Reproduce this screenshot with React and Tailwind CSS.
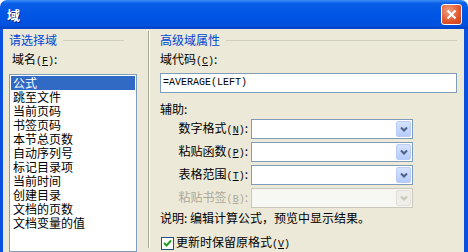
import React from "react";

const font = "font-['Noto_Sans_CJK_SC','Liberation_Sans',sans-serif]";

const items = [
  "公式",
  "跳至文件",
  "当前页码",
  "书签页码",
  "本节总页数",
  "自动序列号",
  "标记目录项",
  "当前时间",
  "创建目录",
  "文档的页数",
  "文档变量的值",
];

const Key = ({ k }) => (
  <span className="font-['Liberation_Mono',monospace] text-[10px]">
    (<u>{k}</u>)
  </span>
);

function Combo({ label, k, disabled }) {
  return (
    <div className="flex items-center h-[20px] mb-[3px]">
      <div className={`w-[91px] pr-[3px] text-right whitespace-nowrap ${disabled ? "text-[#aca899]" : "text-black"}`}>
        {label}
        <Key k={k} />:
      </div>
      <div
        className={`w-[162px] h-[20px] border flex justify-end items-center pr-[1px] ${
          disabled ? "border-[#c9c7ba] bg-[#f7f7f4]" : "border-[#7f9db9] bg-white"
        }`}
      >
        <div
          className={`w-[15px] h-[16px] rounded-[2px] flex items-center justify-center ${
            disabled
              ? "bg-[#efeee8] border border-[#e2e0d8]"
              : "bg-[linear-gradient(#d6e3fd,#b5cbfb)] border border-[#b9cdf9]"
          }`}
        >
          <svg width="8" height="6" viewBox="0 0 8 6">
            <path
              d="M1 1.5 L4 4.5 L7 1.5"
              fill="none"
              stroke={disabled ? "#c9c7ba" : "#4d6185"}
              strokeWidth="2"
            />
          </svg>
        </div>
      </div>
    </div>
  );
}

export default function App() {
  return (
    <div className={`w-[468px] h-[252px] overflow-hidden flex flex-col text-[12px] leading-[14px] ${font}`}>
      <div className="h-[29px] shrink-0 rounded-t-[7px] bg-[linear-gradient(#3b8cf6_0%,#0a5fe6_12%,#0055e5_50%,#0052df_85%,#0043c6_100%)] flex items-center justify-between pl-[7px] pr-[6px]">
        <span className="text-white font-bold text-[13px] [text-shadow:1px_1px_#0a1e80]">域</span>
        <div className="w-[21px] h-[21px] rounded-[3px] border border-white bg-[radial-gradient(circle_at_35%_30%,#f0a080,#e2552c_60%,#c6401b)] flex items-center justify-center">
          <svg width="11" height="11" viewBox="0 0 11 11">
            <path d="M1.5 1.5 L9.5 9.5 M9.5 1.5 L1.5 9.5" stroke="white" strokeWidth="2.2" />
          </svg>
        </div>
      </div>
      <div className="flex-1 flex bg-[#ece9d8] border-l-[3px] border-r-[4px] border-[#0a4fe0]">
        <div className="w-[145px] pl-[6px] pt-[5px] shrink-0">
          <div className="flex items-center h-[12px]">
            <span className="text-[#0046d5]">请选择域</span>
            <div className="ml-[6px] w-[61px] border-t border-[#d0d0bf]" />
          </div>
          <div className="mt-[6px] pl-[3px]">
            域名<Key k="F" />:
          </div>
          <div className="mt-[5px] w-[128px] h-[178px] border border-[#7f9db9] bg-white p-[1px]">
            {items.map((t, i) => (
              <div
                key={t}
                className={`h-[14px] leading-[14px] pl-[2px] whitespace-nowrap ${i === 0 ? "bg-[#316ac5] text-white" : "text-black"}`}
              >
                {t}
              </div>
            ))}
          </div>
        </div>
        <div className="w-[2px] mt-[2px] mb-[4px] border-l border-[#aca899] border-r border-r-white shrink-0" />
        <div className="flex-1 pl-[10px] pt-[5px] pr-[7px]">
          <div className="flex items-center h-[12px]">
            <span className="text-[#0046d5]">高级域属性</span>
            <div className="ml-[6px] flex-1 border-t border-[#d0d0bf]" />
          </div>
          <div className="mt-[6px]">
            域代码<Key k="C" />:
          </div>
          <div className="mt-[4px] h-[20px] border border-[#7f9db9] bg-white pl-[2px] flex items-center font-['Liberation_Mono',monospace] text-[10px]">
            =AVERAGE(LEFT)
          </div>
          <div className="mt-[9px]">辅助:</div>
          <div className="mt-[3px]">
            <Combo label="数字格式" k="N" />
            <Combo label="粘贴函数" k="P" />
            <Combo label="表格范围" k="T" />
            <Combo label="粘贴书签" k="B" disabled />
          </div>
          <div className="mt-[3px]">说明: 编辑计算公式，预览中显示结果。</div>
          <div className="mt-[10px] flex items-center">
            <div className="w-[13px] h-[13px] border border-[#1c5180] bg-white flex items-center justify-center ml-[1px]">
              <svg width="9" height="9" viewBox="0 0 9 9">
                <path d="M1 4 L3.5 6.5 L8 1.5" fill="none" stroke="#21a121" strokeWidth="2" />
              </svg>
            </div>
            <span className="ml-[2px]">
              更新时保留原格式<Key k="V" />
            </span>
          </div>
        </div>
      </div>
    </div>
  );
}
